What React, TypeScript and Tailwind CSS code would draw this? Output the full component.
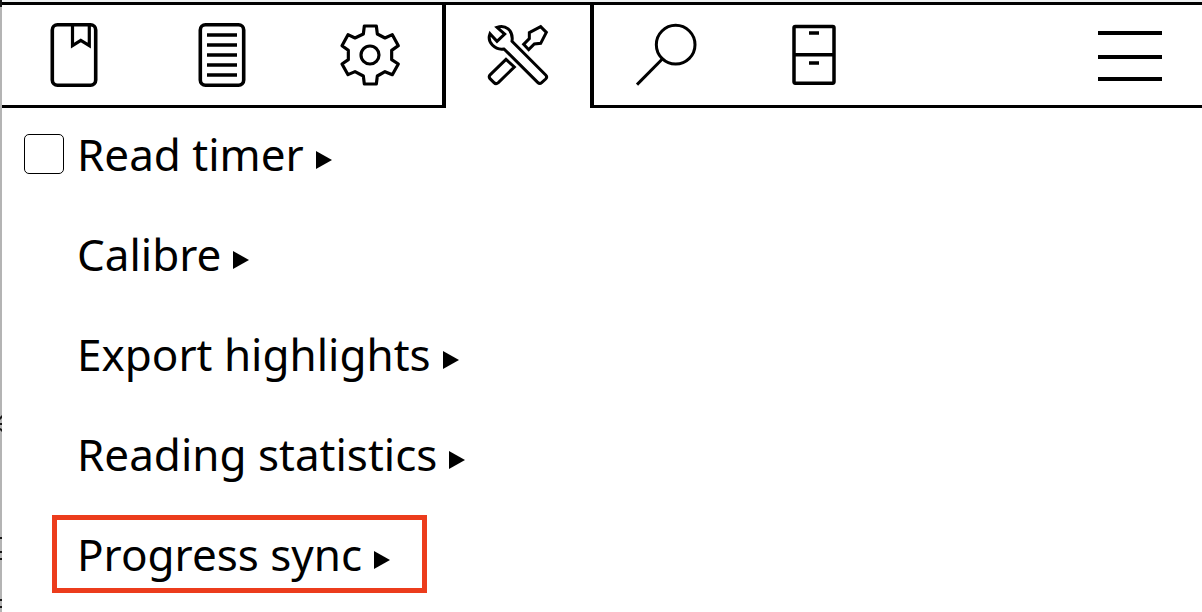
import type { ReactNode } from "react";

const glyph = "h-16 w-16 fill-none stroke-black";

function BookmarkIcon() {
  return (
    <svg viewBox="0 0 64 64" className={glyph} strokeWidth="3.6" aria-hidden="true">
      <rect x="10.3" y="1.8" width="43.4" height="60.4" rx="5.2" />
      <path d="M30.5 2V22.6L38.8 17.3L47.3 22.6V2" strokeWidth="3.2" />
    </svg>
  );
}

function DocumentIcon() {
  return (
    <svg viewBox="0 0 64 64" className={glyph} strokeWidth="3.6" aria-hidden="true">
      <rect x="10.3" y="1.8" width="43.4" height="60.4" rx="5.2" />
      <path d="M17 12H47M17 22H47M17 32H47M17 42H47M17 52H47" />
    </svg>
  );
}

function GearIcon() {
  return (
    <svg viewBox="39 39 192 192" className={glyph} strokeWidth="9.5" strokeLinejoin="round" aria-hidden="true">
      <path d="M118 48H154L157 72L180 84L202 74L220 107L200 121V149L220 162L202 194L180 185L157 198L154 222H118L115 198L90 185L69 194L51 162L70 149V121L51 107L69 74L90 84L115 72Z" />
      <circle cx="135" cy="135" r="27" />
    </svg>
  );
}

function ToolsIcon() {
  return (
    <svg viewBox="153 69 192 192" className={glyph} strokeWidth="9" aria-hidden="true">
      <path d="M165 101L186 124L209 102L186 82C210 73 236 90 231 124L332 225Q338 231 332 237L320 248Q314 253 308 247L207 147C180 151 155 127 165 101Z" />
      <path d="M213 178L238 201L190 248Q183 254 177 248L165 236Q160 230 166 224Z" />
      <path d="M283 98L317 80L334 97L317 130L298 132L281 149L266 133L283 116Z" />
    </svg>
  );
}

function SearchIcon() {
  return (
    <svg viewBox="42 39 192 192" className={glyph} strokeWidth="9" aria-hidden="true">
      <circle cx="167" cy="104" r="58" />
      <path d="M127 147L51 224" />
    </svg>
  );
}

function CabinetIcon() {
  return (
    <svg viewBox="21 39 192 192" className={glyph} strokeWidth="10.5" aria-hidden="true">
      <rect x="57" y="49.5" width="120" height="170" rx="4" />
      <path d="M57 134H177" />
      <path d="M102 69H132M102 159H132" strokeWidth="11" />
    </svg>
  );
}

function MenuIcon() {
  return (
    <svg viewBox="0 0 64 64" className={glyph} strokeWidth="4" aria-hidden="true">
      <path d="M0 10H64M0 34H64M0 56H64" />
    </svg>
  );
}

function Tab({ label, active = false, children }: { label: string; active?: boolean; children: ReactNode }) {
  return (
    <button
      type="button"
      role="tab"
      aria-label={label}
      aria-selected={active}
      className={
        active
          ? "-mx-0.5 flex w-[152px] shrink-0 items-center justify-center border-x-4 border-black pb-[3px]"
          : "flex w-[148px] shrink-0 items-center justify-center border-b-3 border-black"
      }
    >
      {children}
    </button>
  );
}

function MenuItem({ label, highlighted = false }: { label: string; highlighted?: boolean }) {
  return (
    <button
      type="button"
      className={
        highlighted
          ? "flex h-[78px] items-center gap-3 border-5 border-[#ec3c1c] pr-8 pl-5"
          : "flex h-[78px] items-center gap-3 border-5 border-transparent pr-8 pl-5"
      }
    >
      <span>{label}</span>
      <Arrow />
    </button>
  );
}

function Arrow() {
  return (
    <svg viewBox="0 0 16 18" className="mt-3 h-[18px] w-4 shrink-0 fill-black" aria-hidden="true">
      <path d="M0 0L16 9L0 18Z" />
    </svg>
  );
}

function ScreenEdge() {
  return (
    <svg className="absolute inset-y-0 left-0 h-full w-0.5 bg-[#b4b4b4]" aria-hidden="true">
      <path
        d="M0 0H2V7H0ZM0 417L2 415V418L0 420ZM0 423H2V425H0ZM0 428L2 429V432L0 430ZM0 537H2V539H0ZM0 551H2V553H0ZM0 558H2V560H0ZM0 599H2V601H0ZM0 606H2V608H0Z"
        fill="#181818"
      />
    </svg>
  );
}

export default function App() {
  return (
    <div className="relative min-h-screen overflow-hidden bg-white font-['Noto_Sans',sans-serif] text-[44px] leading-[60px] text-black">
      <header className="border-t-2 border-[#eef1f2]">
        <div className="flex h-[106px] border-t-3 border-black">
          <div role="tablist" className="flex shrink-0">
            <Tab label="Bookmarks"><BookmarkIcon /></Tab>
            <Tab label="Document"><DocumentIcon /></Tab>
            <Tab label="Settings"><GearIcon /></Tab>
            <Tab label="Tools" active><ToolsIcon /></Tab>
            <Tab label="Search"><SearchIcon /></Tab>
            <Tab label="Files"><CabinetIcon /></Tab>
          </div>
          <div className="flex grow items-center justify-end border-b-3 border-black pr-10">
            <button type="button" aria-label="Main menu"><MenuIcon /></button>
          </div>
        </div>
      </header>
      <main className="flex flex-col items-start gap-[22px] pt-[7px]">
        <div className="flex h-[78px] items-center pl-6">
          <input
            id="read-timer"
            type="checkbox"
            className="mr-[13px] h-10 w-10 shrink-0 appearance-none rounded-[5px] border border-black checked:bg-black"
          />
          <label htmlFor="read-timer">Read timer</label>
          <button type="button" aria-label="Open read timer" className="flex h-[78px] items-center pl-3">
            <Arrow />
          </button>
        </div>
        <div className="flex flex-col items-start gap-[22px] pl-[52px]">
          <MenuItem label="Calibre" />
          <MenuItem label="Export highlights" />
          <MenuItem label="Reading statistics" />
          <MenuItem label="Progress sync" highlighted />
        </div>
      </main>
      <ScreenEdge />
    </div>
  );
}
